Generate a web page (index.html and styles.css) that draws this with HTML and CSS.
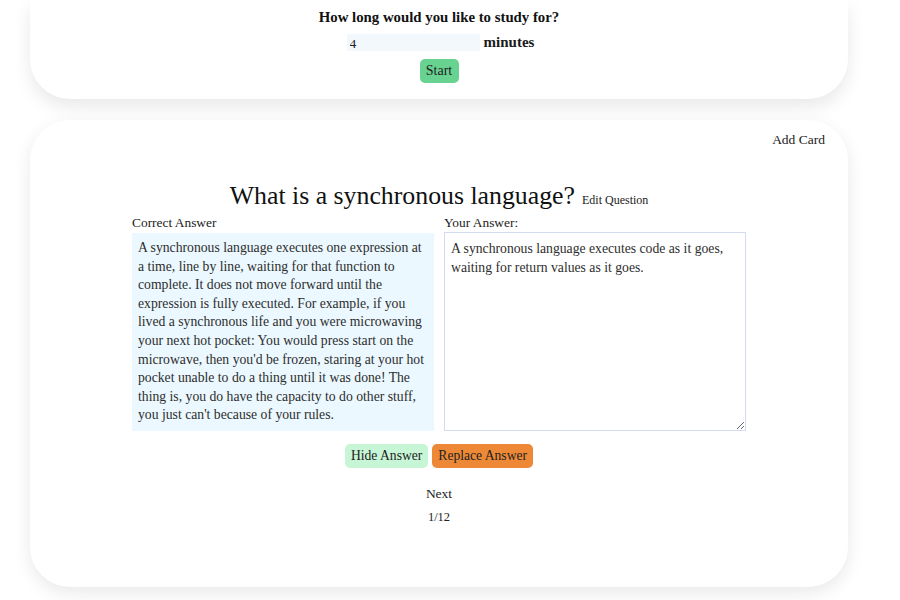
FILE: index.html
```html
<!DOCTYPE html>
<html>
<head>
<meta charset="utf-8">
<link rel="stylesheet" href="styles.css">
</head>
<body>
<section class="timer-card">
  <h3 class="timer-title">How long would you like to study for?</h3>
  <div class="timer-row">
    <input class="timer-input" type="text" value="4">
    <span class="timer-unit">minutes</span>
  </div>
  <button class="btn btn-start">Start</button>
</section>

<section class="study-card">
  <div class="top-bar"><a class="add-card">Add Card</a></div>
  <div class="question-row">
    <h2 class="question">What is a synchronous language?</h2>
    <a class="edit-question">Edit Question</a>
  </div>
  <div class="answers">
    <div class="answer-col">
      <div class="label">Correct Answer</div>
      <div class="correct-box">A synchronous language executes one expression at a time, line by line, waiting for that function to complete. It does not move forward until the expression is fully executed. For example, if you lived a synchronous life and you were microwaving your next hot pocket: You would press start on the microwave, then you'd be frozen, staring at your hot pocket unable to do a thing until it was done! The thing is, you do have the capacity to do other stuff, you just can't because of your rules.</div>
    </div>
    <div class="answer-col">
      <div class="label">Your Answer:</div>
      <textarea class="your-box">A synchronous language executes code as it goes, waiting for return values as it goes.</textarea>
    </div>
  </div>
  <div class="actions">
    <button class="btn btn-hide">Hide Answer</button>
    <button class="btn btn-replace">Replace Answer</button>
  </div>
  <a class="next">Next</a>
  <div class="count">1/12</div>
</section>
</body>
</html>
```

FILE: styles.css
```css
html, body {
  margin: 0;
  padding: 0;
  background: #ffffff;
}
body {
  font-family: "Liberation Serif", "Times New Roman", serif;
  color: #1a1a1a;
}
.timer-card {
  margin: 0 52px 0 30px;
  height: 99px;
  box-sizing: border-box;
  border-radius: 0 0 40px 40px;
  background: #fff;
  box-shadow: 0 8px 18px rgba(0, 0, 0, 0.09);
  display: flex;
  flex-direction: column;
  align-items: center;
  padding-top: 9px;
}
.timer-title {
  margin: 0;
  font-size: 14.8px;
  font-weight: bold;
  line-height: 17px;
  color: #111;
}
.timer-row {
  display: flex;
  align-items: center;
  gap: 4px;
  margin-top: 8px;
  margin-left: 3px;
}
.timer-input {
  width: 133px;
  height: 17px;
  box-sizing: border-box;
  border: none;
  background: #f3f8fc;
  font-family: inherit;
  font-size: 13.5px;
  padding: 2px 3px 0;
  color: #222;
}
.timer-unit {
  font-weight: bold;
  font-size: 15px;
}
.btn {
  font-family: inherit;
  font-size: 13.6px;
  border: none;
  border-radius: 5px;
  height: 24px;
  padding: 0 6px;
  color: #222;
  cursor: pointer;
}
.btn-start {
  margin-top: 8px;
  background: #68d391;
  width: 39px;
  padding: 0;
  font-size: 14px;
}
.study-card {
  margin: 21px 52px 13px 30px;
  height: 467px;
  box-sizing: border-box;
  border-radius: 40px;
  background: #fff;
  box-shadow: 0 6px 18px rgba(0, 0, 0, 0.09);
  display: flex;
  flex-direction: column;
  align-items: center;
  padding: 12px 23px 0;
}
.top-bar {
  align-self: stretch;
  display: flex;
  justify-content: flex-end;
}
.add-card {
  font-size: 13.5px;
  line-height: 16px;
  color: #222;
}
.question-row {
  display: flex;
  align-items: baseline;
  gap: 7px;
  margin-top: 33px;
}
.question {
  margin: 0;
  font-weight: normal;
  font-size: 25.8px;
  line-height: 30px;
  color: #111;
}
.edit-question {
  font-size: 12px;
  color: #222;
}
.answers {
  display: flex;
  gap: 10px;
  margin-top: 4px;
}
.answer-col {
  display: flex;
  flex-direction: column;
  width: 302px;
}
.label {
  font-size: 13.4px;
  line-height: 15px;
  color: #222;
  margin-bottom: 3px;
}
.correct-box {
  background: #ebf8ff;
  height: 198px;
  box-sizing: border-box;
  padding: 6px 6px;
  font-size: 13.7px;
  line-height: 18.6px;
  color: #2d2d2d;
}
.your-box {
  height: 199px;
  margin-top: -1px;
  box-sizing: border-box;
  border: 1px solid #d4dbee;
  padding: 7px 6px;
  font-family: inherit;
  font-size: 13.7px;
  line-height: 18.6px;
  color: #2d2d2d;
  resize: vertical;
  background: #fff;
}
.actions {
  display: flex;
  gap: 4px;
  margin-top: 13px;
}
.btn-hide {
  background: #c6f6d5;
}
.btn-replace {
  background: #ed8936;
}
.next {
  margin-top: 18px;
  font-size: 13.5px;
  line-height: 16px;
  color: #222;
}
.count {
  margin-top: 7px;
  font-size: 12.5px;
  line-height: 16px;
  color: #222;
}
```
